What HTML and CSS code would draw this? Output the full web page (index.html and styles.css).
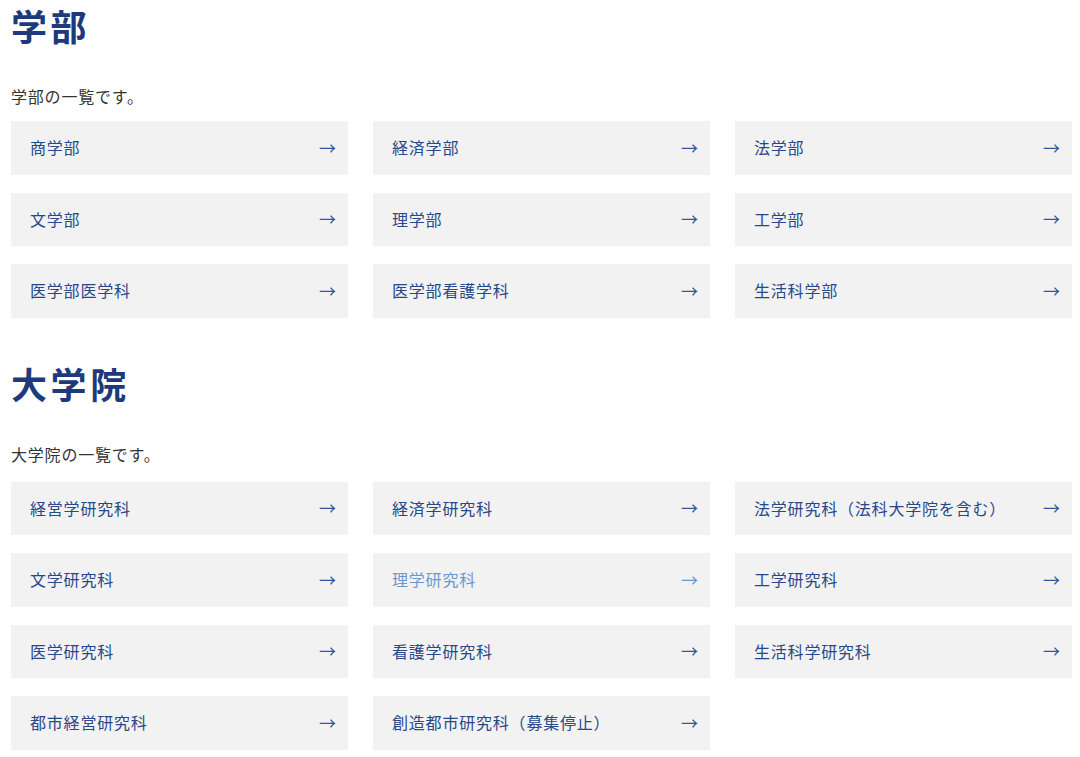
FILE: index.html
```html
<!DOCTYPE html>
<html lang="ja">
<head>
<meta charset="utf-8">
<meta name="viewport" content="width=device-width, initial-scale=1">
<link rel="stylesheet" href="styles.css">
</head>
<body>

<section class="section">
  <h2 class="section-title">学部</h2>
  <p class="section-lead">学部の一覧です。</p>
  <ul class="link-grid">
    <li><a class="link-card" href="#">商学部<span class="arrow">→</span></a></li>
    <li><a class="link-card" href="#">経済学部<span class="arrow">→</span></a></li>
    <li><a class="link-card" href="#">法学部<span class="arrow">→</span></a></li>
    <li><a class="link-card" href="#">文学部<span class="arrow">→</span></a></li>
    <li><a class="link-card" href="#">理学部<span class="arrow">→</span></a></li>
    <li><a class="link-card" href="#">工学部<span class="arrow">→</span></a></li>
    <li><a class="link-card" href="#">医学部医学科<span class="arrow">→</span></a></li>
    <li><a class="link-card" href="#">医学部看護学科<span class="arrow">→</span></a></li>
    <li><a class="link-card" href="#">生活科学部<span class="arrow">→</span></a></li>
  </ul>
</section>

<section class="section">
  <h2 class="section-title">大学院</h2>
  <p class="section-lead">大学院の一覧です。</p>
  <ul class="link-grid">
    <li><a class="link-card" href="#">経営学研究科<span class="arrow">→</span></a></li>
    <li><a class="link-card" href="#">経済学研究科<span class="arrow">→</span></a></li>
    <li><a class="link-card" href="#">法学研究科（法科大学院を含む）<span class="arrow">→</span></a></li>
    <li><a class="link-card" href="#">文学研究科<span class="arrow">→</span></a></li>
    <li><a class="link-card is-hover" href="#">理学研究科<span class="arrow">→</span></a></li>
    <li><a class="link-card" href="#">工学研究科<span class="arrow">→</span></a></li>
    <li><a class="link-card" href="#">医学研究科<span class="arrow">→</span></a></li>
    <li><a class="link-card" href="#">看護学研究科<span class="arrow">→</span></a></li>
    <li><a class="link-card" href="#">生活科学研究科<span class="arrow">→</span></a></li>
    <li><a class="link-card" href="#">都市経営研究科<span class="arrow">→</span></a></li>
    <li><a class="link-card" href="#">創造都市研究科（募集停止）<span class="arrow">→</span></a></li>
  </ul>
</section>

</body>
</html>
```

FILE: styles.css
```css
body {
  margin: 0;
  padding: 0 8px 0 11px;
  background: #fff;
  color: #333;
  font-family: "Noto Sans CJK JP", "Noto Sans", sans-serif;
  letter-spacing: 0.05em;
}

/* Section heading */
.section-title {
  margin: 0 0 34px;
  font-size: 36px;
  line-height: 50px;
  font-weight: 700;
  letter-spacing: 0.1em;
  color: #1c3a7c;
}

.section + .section .section-title {
  margin-top: 40px;
}

.section-lead {
  margin: 0 0 13px;
  font-size: 16px;
  line-height: 24px;
  color: #333;
}

.section + .section .section-lead {
  margin-bottom: 16px;
}

/* Grid of links */
.link-grid {
  list-style: none;
  margin: 0;
  padding: 0;
  display: grid;
  grid-template-columns: repeat(3, 1fr);
  column-gap: 25px;
  row-gap: 18px;
}

.link-card {
  display: flex;
  align-items: center;
  justify-content: space-between;
  height: 53.5px;
  padding: 0 12px 1px 19px;
  box-sizing: border-box;
  background: #f2f2f2;
  color: #28488a;
  font-size: 16px;
  text-decoration: none;
}

.link-card .arrow {
  font-size: 17px;
  letter-spacing: 0;
  color: #34559a;
}

/* Hovered item */
.link-card.is-hover,
.link-card.is-hover .arrow {
  color: #6a98cf;
}
```
